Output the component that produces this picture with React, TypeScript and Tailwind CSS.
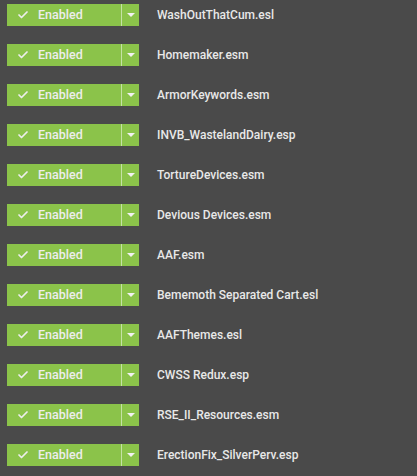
import { Check } from "lucide-react";

const plugins = [
    "WashOutThatCum.esl",
    "Homemaker.esm",
    "ArmorKeywords.esm",
    "INVB_WastelandDairy.esp",
    "TortureDevices.esm",
    "Devious Devices.esm",
    "AAF.esm",
    "Bememoth Separated Cart.esl",
    "AAFThemes.esl",
    "CWSS Redux.esp",
    "RSE_II_Resources.esm",
    "ErectionFix_SilverPerv.esp",
];

function EnabledToggle() {
    return (
        <div className="flex h-[22px] w-[132px] flex-shrink-0 bg-[#8bc34a] text-[#ededed]">
            <div className="flex flex-1 items-center pl-[10px]">
                <Check size={12} strokeWidth={3.5} className="mr-[9px]" />
                <span className="text-[12.5px] font-medium">Enabled</span>
            </div>
            <div className="w-px bg-[#c5e1a5]" />
            <div className="flex w-[17px] items-center justify-center">
                <div className="h-0 w-0 border-x-[4px] border-t-[4px] border-x-transparent border-t-[#f2f2f2]" />
            </div>
        </div>
    );
}

export default function App() {
    return (
        <div
            className="flex h-[476px] w-[417px] flex-col gap-[18px] bg-[#4a4a4a] pl-[7px] pt-[4px]"
            style={{ fontFamily: "Roboto, 'Liberation Sans', sans-serif" }}
        >
            {plugins.map((name) => (
                <div key={name} className="flex items-center">
                    <EnabledToggle />
                    <span className="ml-[18px] text-[12px] font-medium text-[#e8e8e8]">
                        {name}
                    </span>
                </div>
            ))}
        </div>
    );
}
